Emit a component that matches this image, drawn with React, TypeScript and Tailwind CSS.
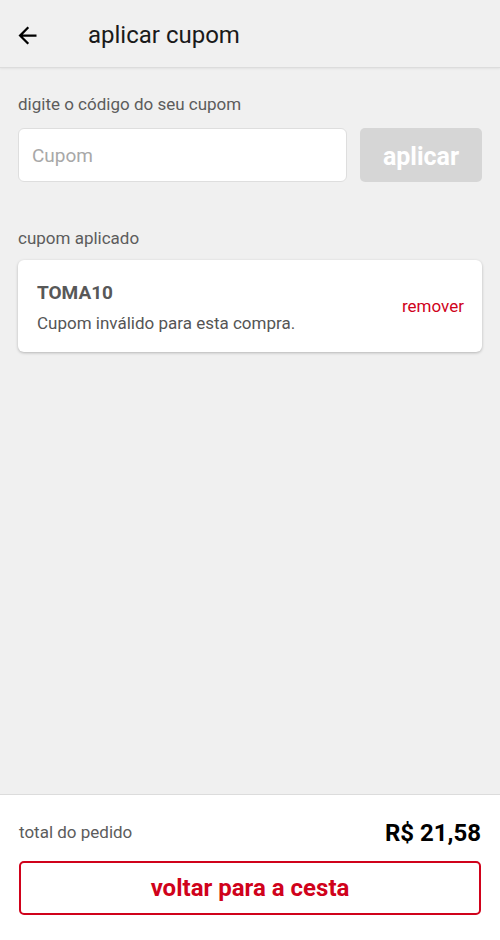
import React from 'react';

// tela de aplicar cupom
export default function App() {
  return (
    <div className="flex h-[940px] w-full flex-col bg-[#f0f0f0] font-['Roboto',sans-serif]">
      <header className="flex h-[68px] shrink-0 items-center border-b border-[#dcdcdc] bg-[#f0f0f0] pt-[3px] shadow-[0_1px_2px_rgba(0,0,0,0.06)]">
        <button className="ml-[13px] flex h-[28px] w-[28px] items-center justify-center text-black">
          <svg width="27" height="27" viewBox="0 0 24 24" fill="currentColor">
            <path d="M20 11H7.83l5.59-5.59L12 4l-8 8 8 8 1.41-1.41L7.83 13H20v-2z" />
          </svg>
        </button>
        <h1 className="ml-[47px] text-[24px] leading-7 text-[#1a1a1a]">aplicar cupom</h1>
      </header>

      <main className="flex-1 px-[18px] pt-[26px]">
        <p className="text-[17px] leading-5 text-[#5c5c5c]">digite o código do seu cupom</p>
        <div className="mt-[14px] flex gap-[13px]">
          <input
            placeholder="Cupom"
            className="h-[54px] w-[329px] rounded-[6px] border border-[#dedede] bg-white px-[13px] text-[19px] text-[#333] outline-none placeholder:text-[#a8a8a8]"
          />
          <button className="h-[54px] flex-1 rounded-[5px] bg-[#d6d6d6] pt-[3px] text-[25px] font-bold text-white">
            aplicar
          </button>
        </div>

        <p className="mt-[46px] text-[17px] leading-5 text-[#5c5c5c]">cupom aplicado</p>
        <div className="mt-[12px] flex items-center justify-between rounded-[6px] bg-white pl-[19px] pr-[18px] pt-[21px] pb-[19px] shadow-[0_1px_3px_rgba(0,0,0,0.25)]">
          <div>
            <div className="text-[19px] font-bold leading-6 text-[#585858]">TOMA10</div>
            <div className="mt-[8px] text-[17px] leading-5 text-[#555]">Cupom inválido para esta compra.</div>
          </div>
          <button className="text-[17px] text-[#d0021b]">remover</button>
        </div>
      </main>

      <footer className="shrink-0 border-t border-[#dcdcdc] bg-white px-[19px] pt-[24px] pb-[25px]">
        <div className="flex h-[28px] items-center justify-between">
          <span className="text-[17px] text-[#5c5c5c]">total do pedido</span>
          <span className="text-[24px] font-bold text-black">R$ 21,58</span>
        </div>
        <button className="mt-[14px] h-[54px] w-full rounded-[5px] border-2 border-[#d0021b] bg-white text-[24px] font-bold text-[#d0021b]">
          voltar para a cesta
        </button>
      </footer>
    </div>
  );
}
